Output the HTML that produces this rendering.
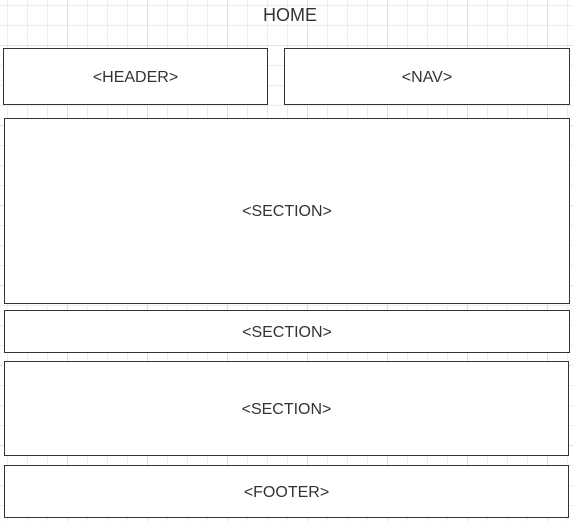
<!DOCTYPE html><html><head><style>
html,body{margin:0;padding:0}
body{width:573px;height:521px;overflow:hidden;position:relative;font-family:"Liberation Sans",sans-serif;color:#333;
background-color:#fff;
background-image:linear-gradient(90deg,#e0e0e0 1px,transparent 1px),linear-gradient(#e0e0e0 1px,transparent 1px),linear-gradient(90deg,#ededed 1px,transparent 1px),linear-gradient(#ededed 1px,transparent 1px);
background-size:80px 80px,80px 80px,20px 20px,20px 20px;
background-position:67px 45px,67px 45px,7px 5px,7px 5px;}
.b{position:absolute;box-sizing:border-box;border:1px solid #333;background:#fff;display:flex;align-items:center;justify-content:center;font-size:16px;padding-top:2px}
.t{position:absolute;left:0;width:580px;text-align:center;top:5px;font-size:18px}
</style></head><body>
<div class="t">HOME</div>
<div class="b" style="left:3px;top:48px;width:265px;height:57px">&lt;HEADER&gt;</div>
<div class="b" style="left:284px;top:48px;width:286px;height:57px">&lt;NAV&gt;</div>
<div class="b" style="left:4px;top:118px;width:566px;height:186px">&lt;SECTION&gt;</div>
<div class="b" style="left:4px;top:310px;width:566px;height:43px">&lt;SECTION&gt;</div>
<div class="b" style="left:4px;top:361px;width:565px;height:95px">&lt;SECTION&gt;</div>
<div class="b" style="left:4px;top:465px;width:565px;height:53px">&lt;FOOTER&gt;</div>
</body></html>
